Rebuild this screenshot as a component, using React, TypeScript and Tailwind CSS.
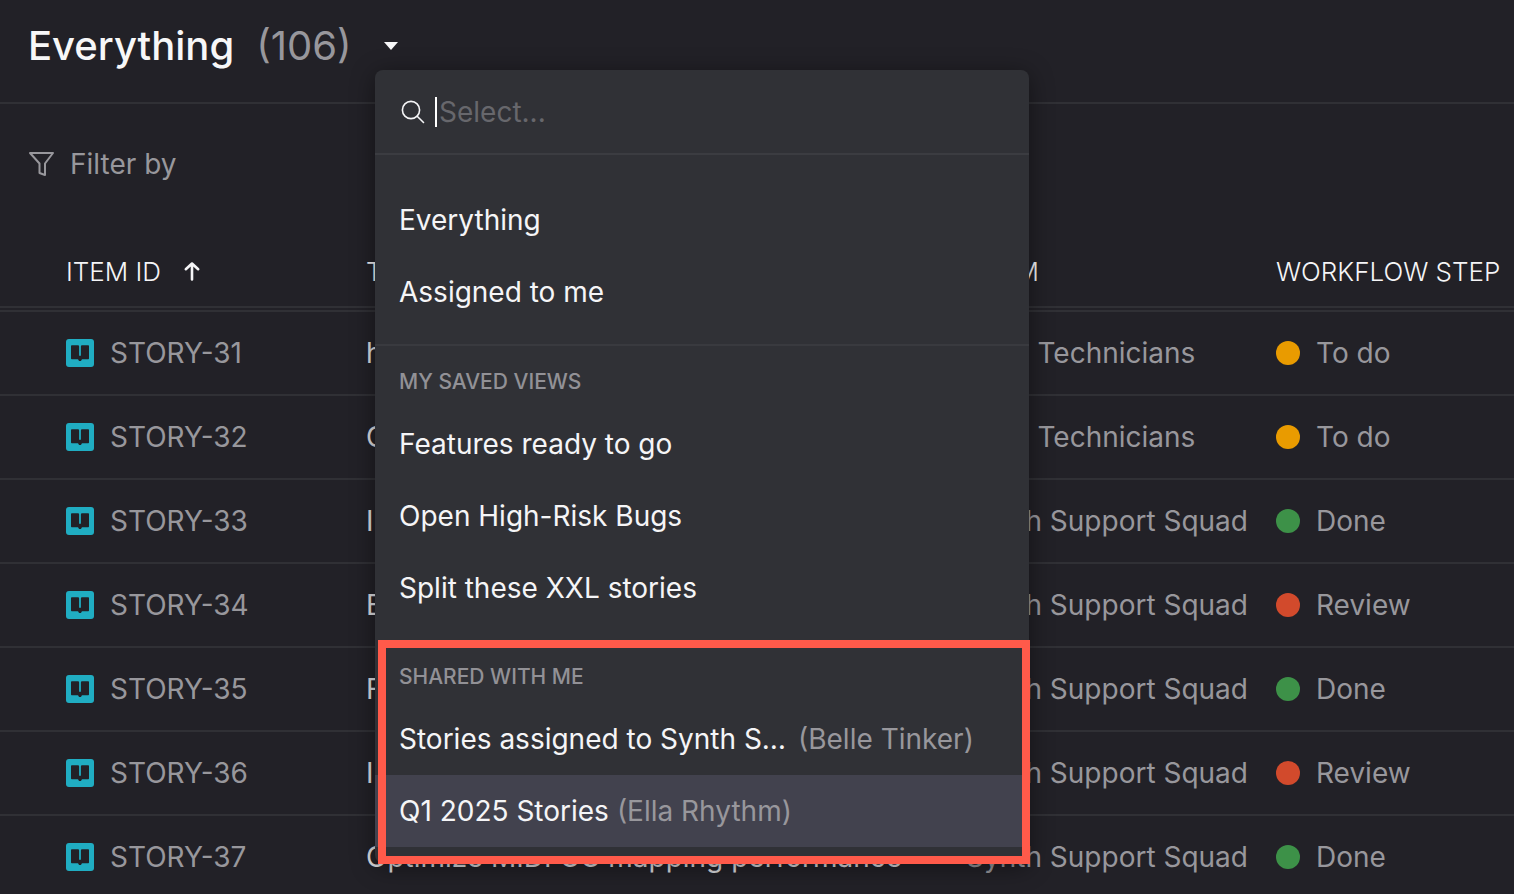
import React, { useState } from 'react';

type Step = 'To do' | 'Done' | 'Review';

interface Story {
    id: string;
    title: string;
    team: string;
    step: Step;
}

interface View {
    name: string;
    owner?: string;
}

const stories: Story[] = [
    { id: 'STORY-31', title: 'hardware sync', team: 'Field Technicians', step: 'To do' },
    { id: 'STORY-32', title: 'Oscillator tuning', team: 'Field Technicians', step: 'To do' },
    { id: 'STORY-33', title: 'Import presets', team: 'Synth Support Squad', step: 'Done' },
    { id: 'STORY-34', title: 'Export patches', team: 'Synth Support Squad', step: 'Review' },
    { id: 'STORY-35', title: 'Fix filter sweep', team: 'Synth Support Squad', step: 'Done' },
    { id: 'STORY-36', title: 'Improve latency', team: 'Synth Support Squad', step: 'Review' },
    { id: 'STORY-37', title: 'Optimize MIDI CC mapping performance', team: 'Synth Support Squad', step: 'Done' },
];

const defaultViews: View[] = [{ name: 'Everything' }, { name: 'Assigned to me' }];

const savedViews: View[] = [
    { name: 'Features ready to go' },
    { name: 'Open High-Risk Bugs' },
    { name: 'Split these XXL stories' },
];

const sharedViews: View[] = [
    { name: 'Stories assigned to Synth Support Squad', owner: 'Belle Tinker' },
    { name: 'Q1 2025 Stories', owner: 'Ella Rhythm' },
];

const stepColors: Record<Step, string> = {
    'To do': 'bg-[#e99b00]',
    Done: 'bg-[#3d9148]',
    Review: 'bg-[#d24a2c]',
};

const StoryIcon = () => (
    <svg viewBox="0 0 28 28" className="h-7 w-7 shrink-0" aria-hidden="true">
        <rect width="28" height="28" rx="3" fill="#20adc2" />
        <path
            d="M5 7.2C5 6.5 5.5 6.2 6 6.2h5.600c1 0 1.500.4 1.500 1.200v9.400h1.800V7.400c0-.8.5-1.200 1.500-1.200H22c.6 0 1 .3 1 1v12c0 .6-.4 1-1 1h-5.200c-.9 0-1.300.4-1.500 1.200-.3.9-2.300.9-2.600 0-.2-.8-.6-1.200-1.500-1.200H6c-.5 0-1-.4-1-1z"
            fill="#222127"
        />
    </svg>
);

const FilterIcon = () => (
    <svg viewBox="0 0 26 26" className="h-[26px] w-[26px]" fill="none" stroke="currentColor" strokeWidth="2" strokeLinejoin="round" aria-hidden="true">
        <path d="M2 2h23l-8 10.500v11.500l-5.500-2v-9.500z" />
    </svg>
);

const SearchIcon = () => (
    <svg viewBox="0 0 24 24" className="h-6 w-6 text-[#f5f5f7]" fill="none" stroke="currentColor" strokeWidth="1.600" strokeLinecap="round" aria-hidden="true">
        <circle cx="10" cy="10" r="8.600" />
        <path d="M16.200 16.200l6.300 6.300" />
    </svg>
);

const SortIcon = () => (
    <svg viewBox="0 0 18 20" className="h-5 w-[18px]" fill="none" stroke="currentColor" strokeWidth="2.600" strokeLinecap="round" strokeLinejoin="round" aria-hidden="true">
        <path d="M9 18.500V2.500M2.800 8.200L9 2.500l6.200 5.700" />
    </svg>
);

const ViewOption = ({ view, selected }: { view: View; selected?: boolean }) => (
    <li>
        <button
            type="button"
            className={`flex h-18 w-full items-center gap-2 px-6 text-left text-[28px] text-[#f5f5f7] ${selected ? 'bg-[#42424e]' : ''}`}
        >
            <span className="max-w-[391px] truncate">{view.name}</span>
            {view.owner && <span className="text-[#98979c]">({view.owner})</span>}
        </button>
    </li>
);

const GroupLabel = ({ children }: { children: React.ReactNode }) => (
    <h2 className="flex h-13 items-center px-6 text-[21px] font-medium text-[#929196]">{children}</h2>
);

const ViewMenu = () => {
    const [query, setQuery] = useState('');

    return (
        <div className="absolute top-[70px] left-[375px] z-10 w-[654px] rounded-lg bg-[#303136] pb-4 shadow-[0_4px_24px_rgba(0,0,0,0.45)]">
            <label className="flex h-[85px] items-center border-b-2 border-[#3b3c41] px-[26px]">
                <SearchIcon />
                <span className="ml-2.5 h-[30px] w-0.5 bg-white" />
                <input
                    type="text"
                    aria-label="Search views"
                    placeholder="Select..."
                    value={query}
                    onChange={e => setQuery(e.target.value)}
                    className="min-w-0 flex-1 bg-transparent pl-0.5 text-[28px] caret-transparent outline-none placeholder:text-[#67676c]"
                />
            </label>
            <ul className="border-b-2 border-[#393a3f] pt-[29px] pb-4">
                {defaultViews.map(v => <ViewOption key={v.name} view={v} />)}
            </ul>
            <section className="pt-2.5">
                <GroupLabel>MY SAVED VIEWS</GroupLabel>
                <ul>
                    {savedViews.map(v => <ViewOption key={v.name} view={v} />)}
                </ul>
            </section>
            <section className="relative pt-[27px]">
                <GroupLabel>SHARED WITH ME</GroupLabel>
                <ul>
                    {sharedViews.map(v => <ViewOption key={v.name} view={v} selected={v.owner === 'Ella Rhythm'} />)}
                </ul>
                {/* highlight around the shared group */}
                <div className="pointer-events-none absolute top-4 -right-px -bottom-[17px] left-[3px] border-8 border-[#ff5a4a]" />
            </section>
        </div>
    );
};

export default function App() {
    return (
        <main className="relative h-screen overflow-hidden bg-[#222127] font-['Inter',sans-serif] text-[28px] font-[380] text-[#98979c]">
            <header className="flex h-[104px] border-b-2 border-[#303035] px-7">
                <button type="button" className="flex h-[92px] items-center text-[40px]">
                    <h1 className="font-medium text-[#f7f7f8]">Everything</h1>
                    <span className="ml-[22px]">(106)</span>
                    <svg viewBox="0 0 14 8" className="ml-8 h-2 w-3.5" fill="#f7f7f8" aria-hidden="true">
                        <path d="M0 0h14L7 8z" />
                    </svg>
                </button>
            </header>

            <button type="button" className="ml-7 flex h-[120px] items-center gap-4">
                <FilterIcon />
                Filter by
            </button>

            <table className="w-full table-fixed border-separate border-spacing-0 text-left">
                <colgroup>
                    <col className="w-[366px]" />
                    <col />
                    <col className="w-[310px]" />
                    <col className="w-[238px]" />
                </colgroup>
                <thead className="text-[26px] text-[#f5f5f7] [&_th]:h-22 [&_th]:border-b-6 [&_th]:border-double [&_th]:border-[#303035] [&_th]:pt-3 [&_th]:font-light">
                    <tr>
                        <th className="pl-[66px]">
                            <button type="button" className="flex items-center gap-[22px]">
                                ITEM ID
                                <SortIcon />
                            </button>
                        </th>
                        <th>TITLE</th>
                        <th>TEAM</th>
                        <th>WORKFLOW STEP</th>
                    </tr>
                </thead>
                <tbody className="[&_td]:h-21 [&_td]:border-b-2 [&_td]:border-[#303035]">
                    {stories.map(story => (
                        <tr key={story.id}>
                            <td className="pl-[66px]">
                                <span className="flex items-center gap-4">
                                    <StoryIcon />
                                    {story.id}
                                </span>
                            </td>
                            <td className="truncate text-[#dddde0]">{story.title}</td>
                            <td className="whitespace-nowrap">{story.team}</td>
                            <td>
                                <span className="flex items-center gap-4">
                                    <span className={`h-6 w-6 rounded-full ${stepColors[story.step]}`} />
                                    {story.step}
                                </span>
                            </td>
                        </tr>
                    ))}
                </tbody>
            </table>

            <ViewMenu />
        </main>
    );
}
